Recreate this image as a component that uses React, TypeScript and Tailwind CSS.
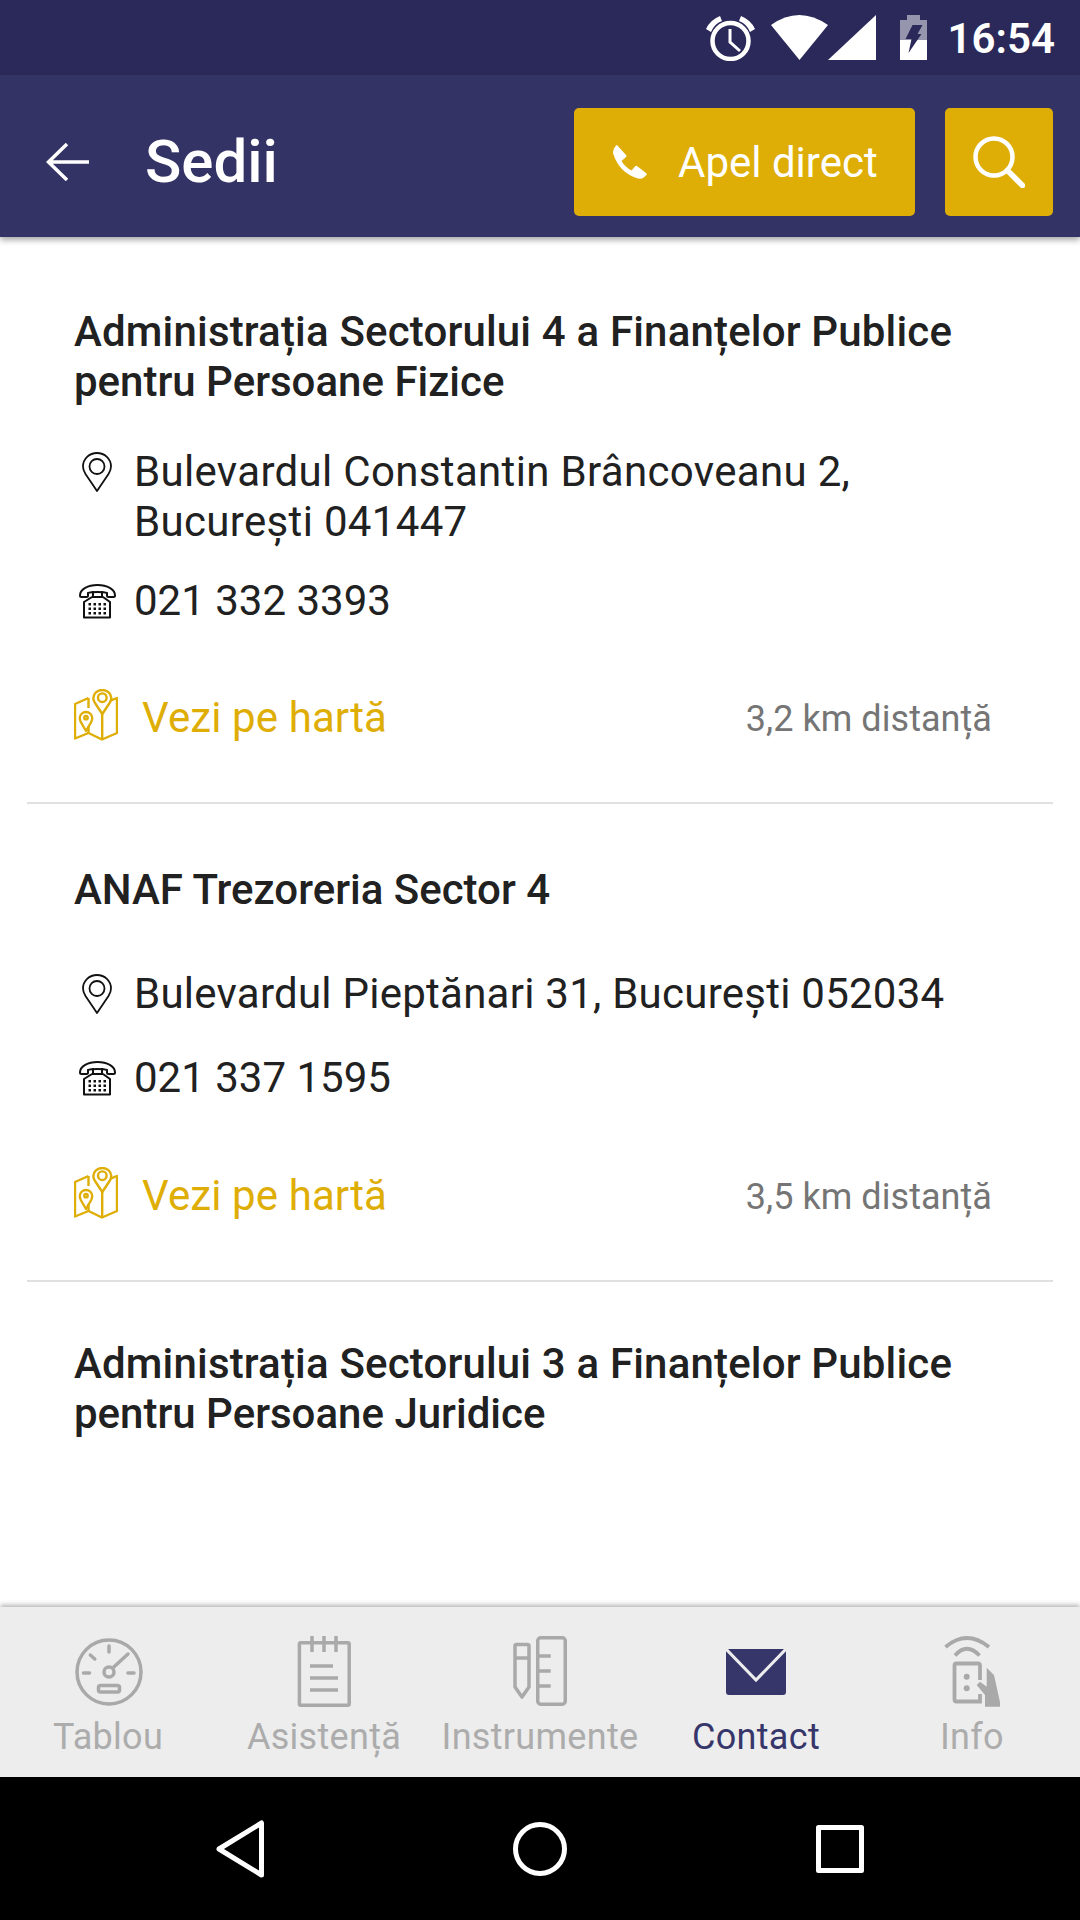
const ROBOTO = "font-['Roboto','Liberation_Sans',sans-serif]";

function AlarmIcon() {
  return (
    <svg width="51" height="46" viewBox="0 0 51 46" fill="none" stroke="#fff">
      <circle cx="25.5" cy="26" r="18" strokeWidth="4.5" />
      <path d="M25 14v13l10 9" strokeWidth="3" />
      <path d="M1 14 Q5 5 15 1 L17 6 Q9 9 6 17Z" fill="#fff" stroke="none" />
      <path d="M50 14 Q46 5 36 1 L34 6 Q42 9 45 17Z" fill="#fff" stroke="none" />
    </svg>
  );
}

function WifiSignalIcons() {
  return (
    <svg width="105" height="45" viewBox="0 0 105 45" fill="#fff">
      <path d="M0 10 Q28 -10 57 10 L28.500 45Z" />
      <path d="M105 0V45H57Z" />
    </svg>
  );
}

function BatteryIcon() {
  return (
    <svg width="27" height="45" viewBox="0 0 27 45">
      <path d="M7 0h13v5h7v20H0V5h7z" fill="#9695ae" />
      <path d="M0 25h27v20H0z" fill="#fff" />
      <path d="M14 11h10l-5 9h4L10 39l3-14H7z" fill="#2a2959" transform="translate(-1.500 -1)" />
    </svg>
  );
}

function PinIcon() {
  return (
    <svg width="30" height="40" viewBox="0 0 30 40" fill="none" stroke="#111" strokeWidth="1.800">
      <path d="M15 39 L3.500 22 Q1 18 1 14.500 A14 13.500 0 0 1 29 14.500 Q29 18 26.500 22Z" strokeLinejoin="round" />
      <circle cx="15" cy="14.500" r="7.500" />
    </svg>
  );
}

function DeskPhoneIcon() {
  return (
    <svg width="37" height="35" viewBox="0 0 37 35" fill="none" stroke="#111" strokeWidth="2">
      <path d="M1 11.500C1 5 9 1 18.500 1S36 5 36 11.500c0 1-.5 1.500-1.500 1.500h-5c-1 0-1.500-.5-1.500-1.500V9C25 7.500 12 7.500 9 9v2.500c0 1-.5 1.500-1.500 1.500h-5C1.500 13 1 12.500 1 11.500Z" />
      <path d="M14 7v6M23 7v6M13 13h11l7 5v15.500H5V18Z" strokeLinejoin="round" />
      <g fill="#111" stroke="none">
        <rect x="9.500" y="19" width="2.500" height="2.500" /><rect x="14.500" y="19" width="2.500" height="2.500" /><rect x="19.500" y="19" width="2.500" height="2.500" /><rect x="24.500" y="19" width="2.500" height="2.500" />
        <rect x="9.500" y="23.500" width="2.500" height="2.500" /><rect x="14.500" y="23.500" width="2.500" height="2.500" /><rect x="19.500" y="23.500" width="2.500" height="2.500" /><rect x="24.500" y="23.500" width="2.500" height="2.500" />
        <rect x="9.500" y="28" width="2.500" height="2.500" /><rect x="14.500" y="28" width="2.500" height="2.500" /><rect x="19.500" y="28" width="2.500" height="2.500" /><rect x="24.500" y="28" width="2.500" height="2.500" />
      </g>
    </svg>
  );
}

function MapIcon() {
  return (
    <svg className="mb-[6px]" width="44" height="52" viewBox="0 0 44 52" fill="none" stroke="#dfae06" strokeWidth="2.400" strokeLinejoin="round">
      <path d="M14.500 9 L1 15V49.500L14.500 44L28 50.500L43 44V9L36.500 11.700" />
      <path d="M14.500 9V19M14.500 37V44M28.200 25V50.500" />
      <path d="M28.300 25 L21 14Q19.300 11 19.300 9A9 8 0 0 1 37.300 9Q37.300 11 35.600 14Z" />
      <circle cx="28.300" cy="8.700" r="4.300" />
      <path d="M12 42 L6.800 33Q5.800 31 5.800 29A6.200 6 0 0 1 18.200 29Q18.200 31 17.200 33Z" />
      <circle cx="12" cy="28.700" r="1.700" />
    </svg>
  );
}

function GaugeIcon() {
  return (
    <svg width="72" height="72" viewBox="0 0 72 72" fill="none" stroke="#a9a9a9" strokeWidth="3.500" strokeLinecap="round">
      <circle cx="37" cy="38" r="32" />
      <path d="M37 12v6M18.300 21l4.500 4M11.500 39h6M56 39h6M41.800 33 56 20" />
      <circle cx="37" cy="38" r="5" />
      <rect x="26.500" y="51.500" width="21" height="6.500" rx="2" />
    </svg>
  );
}

function NotepadIcon() {
  return (
    <svg width="56" height="73" viewBox="0 0 56 73" fill="none" stroke="#a9a9a9" strokeWidth="3.500">
      <rect x="3.400" y="8.750" width="49.800" height="62.500" rx="1.500" />
      <path d="M16 2v16M28 2v16M40 2v16" />
      <path d="M14 32h23M14 44h28M14 56h28" />
    </svg>
  );
}

function ToolsIcon() {
  return (
    <svg width="56" height="72" viewBox="0 0 56 72" fill="none" stroke="#a9a9a9" strokeWidth="3.500" strokeLinejoin="round">
      <path d="M3 12q0-1.500 1.500-1.500h11q1.500 0 1.500 1.500v41l-7 10-7-10Z" />
      <path d="M3 24h14" />
      <rect x="25.750" y="3.750" width="27.500" height="66.500" rx="3" />
      <path d="M26 22h12.700M26 37h12.700M26 52h12.700" />
    </svg>
  );
}

function MailIcon() {
  return (
    <svg className="mt-[4px]" width="60" height="46" viewBox="0 0 60 46">
      <path d="M0 0h60v43q0 3-3 3H3q-3 0-3-3Z" fill="#37366b" />
      <path d="M0 0l30 31L60 0" fill="none" stroke="#ededed" strokeWidth="3" />
    </svg>
  );
}

function InfoIcon() {
  return (
    <svg width="56" height="73" viewBox="0 0 56 73">
      <g fill="none" stroke="#a9a9a9" strokeWidth="3.800">
        <path d="M1.500 13Q22.700-5 45 13" />
        <path d="M11 21.500Q22.700 8 35.500 21.500" />
        <path d="M36 46V31.500q0-2-2-2H12.500q-2 0-2 2v34q0 2 2 2H36V60" />
      </g>
      <circle cx="22.700" cy="42.700" r="3" fill="#a9a9a9" />
      <circle cx="22.700" cy="54.300" r="3" fill="#a9a9a9" />
      <path d="M42.700 33.700 50 41 57 72.700H41V61L32.700 51 36 47.700 42.700 52.700Z" fill="#a9a9a9" />
    </svg>
  );
}

const tabs = [
  { label: "Tablou", icon: <GaugeIcon /> },
  { label: "Asistență", icon: <NotepadIcon /> },
  { label: "Instrumente", icon: <ToolsIcon /> },
  { label: "Contact", icon: <MailIcon />, active: true },
  { label: "Info", icon: <InfoIcon /> },
];

function MapRow({ distance }: { distance: string }) {
  return (
    <div className="flex items-center h-[60px] pl-[47px] pr-[61px]">
      <MapIcon />
      <span className="ml-[24px] text-[42px] leading-[50px] tracking-[0.1px] text-[#dfae06]">Vezi pe hartă</span>
      <span className="ml-auto pt-[2px] text-[36px] leading-[50px] tracking-[0.05px] text-[#757575]">{distance}</span>
    </div>
  );
}

function InfoRow({ icon, children, className }: { icon: React.ReactNode; children: React.ReactNode; className: string }) {
  return (
    <div className={`flex pl-[46px] pr-[20px] ${className}`}>
      <div className="w-[61px] h-[50px] flex items-center justify-center pr-[13px] shrink-0">{icon}</div>
      <div className="text-[42px] leading-[50px] text-[#212121]">{children}</div>
    </div>
  );
}

const titleClass = "pl-[47px] text-[42px] leading-[50px] font-medium text-[#212121]";

export default function App() {
  return (
    <div className={`h-[1920px] w-[1080px] flex flex-col overflow-hidden bg-white ${ROBOTO}`}>
      {/* status bar */}
      <div className="h-[75px] shrink-0 bg-[#2a2959] flex items-center justify-end pr-[25px]">
        <AlarmIcon />
        <div className="ml-[15px]"><WifiSignalIcons /></div>
        <div className="ml-[24px]"><BatteryIcon /></div>
        <span className="ml-[21px] pt-[2px] text-[42px] font-semibold text-white">16:54</span>
      </div>

      {/* app bar */}
      <div className="relative z-10 h-[162px] shrink-0 bg-[#343366] flex items-center pt-[12px] pr-[27px] shadow-[0_3px_6px_rgba(0,0,0,0.35)]">
        <svg className="ml-[46px]" width="43" height="38" viewBox="0 0 43 38" fill="none" stroke="#fff" strokeWidth="3.500">
          <path d="M43 19H2M21 1 2.500 19 21 37" />
        </svg>
        <span className="ml-[56px] text-[60px] font-medium text-white">Sedii</span>
        <div className="ml-auto flex items-center w-[341px] h-[108px] rounded-[5px] bg-[#deae06]">
          <svg className="ml-[39px]" width="34" height="34" viewBox="0 0 34 34" fill="#fff">
            <path d="M4 0 13 10Q14 11 13 12L8.500 16Q12 22 18.500 25.500L22 21.500Q23 20.500 24 21L33 28Q34.500 29 33 30.500L30 33Q28 34 25 33.500 6 28 0 8 0 5 1 3.500L3 .5Q3.500 0 4 0Z" />
          </svg>
          <span className="ml-[31px] text-[42px] text-white">Apel direct</span>
        </div>
        <div className="ml-[30px] w-[108px] h-[108px] rounded-[5px] bg-[#deae06] flex items-center justify-center">
          <svg width="52" height="52" viewBox="0 0 52 52" fill="none" stroke="#fff" strokeWidth="4.500" strokeLinecap="round">
            <circle cx="21" cy="21" r="18.500" />
            <path d="M34.500 34.500 49.500 49.500" strokeWidth="5.500" />
          </svg>
        </div>
      </div>

      {/* list */}
      <div className="flex-1 overflow-hidden">
        <div className="mx-[27px] border-b-2 border-[#e0e0e0] pt-[70px] h-[567px]">
          <h2 className={titleClass}>
            <span className="tracking-[0.17px]">Administrația Sectorului 4 a Finanțelor Publice</span><br />pentru Persoane Fizice
          </h2>
          <InfoRow icon={<PinIcon />} className="mt-[40px]">
            <span className="tracking-[0.33px]">Bulevardul Constantin Brâncoveanu 2,<br />București 041447</span>
          </InfoRow>
          <InfoRow icon={<DeskPhoneIcon />} className="mt-[29px]">021 332 3393</InfoRow>
          <div className="mt-[62px]"><MapRow distance="3,2 km distanță" /></div>
        </div>
        <div className="mx-[27px] border-b-2 border-[#e0e0e0] pt-[61px] h-[478px]">
          <h2 className={titleClass}>ANAF Trezoreria Sector 4</h2>
          <InfoRow icon={<PinIcon />} className="mt-[54px]">
            <span className="tracking-[0.25px]">Bulevardul Pieptănari 31, București 052034</span>
          </InfoRow>
          <InfoRow icon={<DeskPhoneIcon />} className="mt-[34px]">021 337 1595</InfoRow>
          <div className="mt-[63px]"><MapRow distance="3,5 km distanță" /></div>
        </div>
        <div className="mx-[27px] pt-[57px]">
          <h2 className={titleClass}>
            <span className="tracking-[0.17px]">Administrația Sectorului 3 a Finanțelor Publice</span><br />pentru Persoane Juridice
          </h2>
        </div>
      </div>

      {/* bottom tabs */}
      <div className="relative z-10 h-[170px] shrink-0 bg-[#ededed] grid grid-cols-5 shadow-[0_-2px_5px_rgba(0,0,0,0.3)]">
        {tabs.map((t) => (
          <div key={t.label} className="flex flex-col items-center">
            <div className="h-[72px] mt-[27px] flex items-center justify-center">{t.icon}</div>
            <span className={`mt-[6px] text-[36px] leading-[50px] tracking-[0.3px] whitespace-nowrap ${t.active ? "text-[#37366b]" : "text-[#acacac]"}`}>
              {t.label}
            </span>
          </div>
        ))}
      </div>

      {/* android nav */}
      <div className="h-[143px] shrink-0 bg-black grid grid-cols-3 px-[90px] items-center justify-items-center">
        <svg width="48" height="58" viewBox="0 0 48 58" fill="none" stroke="#fff" strokeWidth="5" strokeLinejoin="round">
          <path d="M45.500 3V55L3 29Z" />
        </svg>
        <svg width="54" height="54" viewBox="0 0 54 54" fill="none" stroke="#fff" strokeWidth="5">
          <circle cx="27" cy="27" r="24.500" />
        </svg>
        <svg width="48" height="48" viewBox="0 0 48 48" fill="none" stroke="#fff" strokeWidth="5" strokeLinejoin="round">
          <rect x="2.500" y="2.500" width="43" height="43" />
        </svg>
      </div>
    </div>
  );
}
